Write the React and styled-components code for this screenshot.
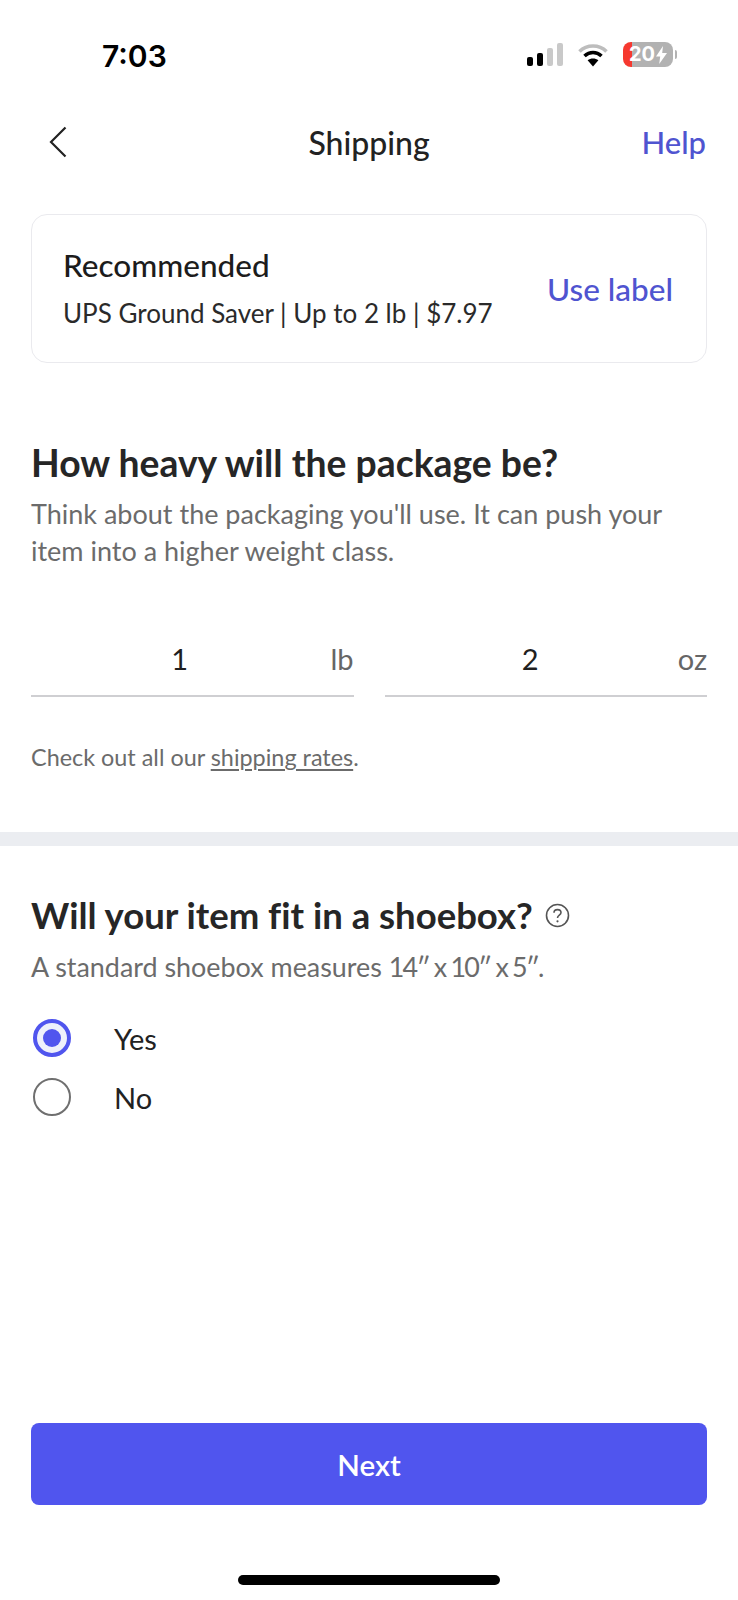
import React from "react";
import styled, { createGlobalStyle } from "styled-components";

const Global = createGlobalStyle`
  html, body { margin: 0; padding: 0; background: #fff; }
  * { box-sizing: border-box; }
`;

const FONT = `Lato, "Noto Sans", sans-serif`;
const BLUE = "#5055ee";
const LINK = "#4f54d0";

const Page = styled.div`
  width: 738px;
  height: 1600px;
  display: flex;
  flex-direction: column;
  background: #fff;
  font-family: ${FONT};
  color: #222;
  overflow: hidden;
`;

const StatusBar = styled.div`
  height: 111px;
  padding: 36px 65px 0 102px;
  display: flex;
  justify-content: space-between;
  align-items: flex-start;
`;

const Clock = styled.div`
  font-family: Inter, sans-serif;
  font-size: 30px;
  font-weight: 600;
  line-height: 40px;
  color: #000;
`;

const StatusIcons = styled.div`
  display: flex;
  align-items: center;
  margin-top: 6px;
  gap: 15px;
`;

const Battery = styled.div`
  position: relative;
  width: 50px;
  height: 25px;
  border-radius: 8px;
  background: linear-gradient(90deg, #f6392f 0 9px, #b2b2b2 9px);
  color: #fff;
  font-family: Inter, sans-serif;
  font-weight: 700;
  font-size: 20px;
  line-height: 25px;
  padding-left: 6px;
  display: flex;
  align-items: center;
  gap: 1px;
  &::after {
    content: "";
    position: absolute;
    right: -4px;
    top: 8px;
    width: 2px;
    height: 9px;
    border-radius: 0 2px 2px 0;
    background: #b2b2b2;
  }
`;

const NavBar = styled.div`
  height: 62px;
  padding: 0 32px;
  display: grid;
  grid-template-columns: 1fr auto 1fr;
  align-items: center;
`;

const BackSlot = styled.div`
  padding-left: 17px;
  display: flex;
  align-items: center;
`;

const NavTitle = styled.div`
  font-size: 32px;
  font-weight: 500;
  color: #222;
`;

const HelpLink = styled.div`
  justify-self: end;
  font-size: 31px;
  font-weight: 500;
  color: ${LINK};
`;

const Content = styled.div`
  padding: 0 31px;
  display: flex;
  flex-direction: column;
`;

const Card = styled.div`
  margin-top: 41px;
  height: 149px;
  border: 1.5px solid #eaeaee;
  border-radius: 16px;
  padding: 0 33px 0 31px;
  display: flex;
  align-items: center;
  justify-content: space-between;
`;

const CardText = styled.div`
  display: flex;
  flex-direction: column;
  gap: 12px;
`;

const CardTitle = styled.div`
  font-size: 31.5px;
  font-weight: 500;
  line-height: 36px;
  color: #1c1c1c;
`;

const CardLine = styled.div`
  font-size: 26px;
  line-height: 36px;
  color: #2a2a2a;
`;

const CardAction = styled.div`
  font-size: 31.5px;
  font-weight: 500;
  color: ${LINK};
`;

const Heading = styled.h2`
  margin: ${(p) => p.$top}px 0 0;
  font-size: ${(p) => p.$size}px;
  font-weight: 700;
  line-height: 44px;
  color: #262626;
  font-variant-ligatures: none;
  display: flex;
  align-items: center;
  gap: 12px;
`;

const Body = styled.p`
  margin: ${(p) => p.$top}px 0 0;
  font-size: ${(p) => p.$size}px;
  line-height: 37px;
  color: #6b6b6b;
`;

const Measure = styled.span`
  letter-spacing: -1.8px;
`;

const Fields = styled.div`
  margin-top: 72px;
  display: grid;
  grid-template-columns: 1fr 1fr;
  gap: 31px;
`;

const Field = styled.div`
  height: 56px;
  border-bottom: 2px solid #cfcfd2;
  display: grid;
  align-items: start;
  font-size: 29px;
  line-height: 36px;
`;

const FieldValue = styled.span`
  grid-column: 1;
  grid-row: 1;
  text-align: center;
  color: #1f1f1f;
  padding-right: ${(p) => p.$shift}px;
`;

const FieldUnit = styled.span`
  grid-column: 1;
  grid-row: 1;
  text-align: right;
  color: #666;
`;

const RateNote = styled.div`
  margin-top: 43px;
  font-size: 23.4px;
  line-height: 34px;
  color: #6b6b6b;
`;

const RateLink = styled.span`
  text-decoration: underline;
  text-underline-offset: 3px;
  text-decoration-thickness: 1.5px;
`;

const Divider = styled.div`
  margin-top: 58px;
  height: 14px;
  background: #ebedf1;
`;

const Radios = styled.div`
  margin-top: 34px;
  display: flex;
  flex-direction: column;
  gap: 21px;
`;

const RadioRow = styled.div`
  display: flex;
  align-items: center;
  gap: 43px;
  padding-left: 2px;
  font-size: 29px;
  color: #222;
`;

const RadioDot = styled.span`
  width: 38px;
  height: 38px;
  border-radius: 50%;
  flex: none;
  border: ${(p) => (p.$on ? `4px solid ${BLUE}` : "2px solid #6f6f6f")};
  background: ${(p) => (p.$on ? "#eef0fb" : "#fff")};
  display: flex;
  align-items: center;
  justify-content: center;
  &::after {
    content: "";
    display: ${(p) => (p.$on ? "block" : "none")};
    width: 18px;
    height: 18px;
    border-radius: 50%;
    background: ${BLUE};
  }
`;

const Footer = styled.div`
  margin-top: auto;
  padding: 0 31px 15px;
  display: flex;
  flex-direction: column;
  align-items: center;
`;

const NextButton = styled.button`
  width: 100%;
  height: 82px;
  border: none;
  border-radius: 8px;
  background: ${BLUE};
  color: #fff;
  font-family: ${FONT};
  font-size: 29.5px;
  font-weight: 600;
`;

const HomeBar = styled.div`
  margin-top: 70px;
  width: 262px;
  height: 10px;
  border-radius: 5px;
  background: #000;
`;

const Signal = () => (
  <svg width="36" height="24" viewBox="0 0 36 24">
    <rect x="0" y="14" width="6" height="9" rx="2" fill="#000" />
    <rect x="10" y="10" width="6" height="13" rx="2" fill="#000" />
    <rect x="20" y="5" width="6" height="18" rx="2" fill="#c9c9c9" />
    <rect x="30" y="0" width="6" height="23" rx="2" fill="#c9c9c9" />
  </svg>
);

const Wifi = () => (
  <svg width="30" height="24" viewBox="0 0 30 24">
    <path d="M1.5 8.5C9 1.2 21 1.2 28.5 8.5" fill="none" stroke="#bdbdbd" strokeWidth="3.6" />
    <path d="M6.5 13C11.5 8.4 18.5 8.4 23.5 13" fill="none" stroke="#000" strokeWidth="3.6" />
    <path d="M15 23.5l-5.4-6.3c3.2-2.4 7.6-2.4 10.8 0z" fill="#000" />
  </svg>
);

const Bolt = () => (
  <svg width="11" height="18" viewBox="0 0 11 18">
    <path d="M7 0L0 10.5h4.2L3.2 18 11 7H6.2z" fill="#fff" />
  </svg>
);

const Back = () => (
  <svg width="18" height="32" viewBox="0 0 18 32">
    <path d="M16.5 1.5L2 16l14.5 14.5" fill="none" stroke="#222" strokeWidth="2.2" />
  </svg>
);

const HelpIcon = () => (
  <svg width="25" height="25" viewBox="0 0 25 25">
    <circle cx="12.5" cy="12.5" r="11" fill="none" stroke="#555" strokeWidth="1.6" />
    <path d="M9 9.8c0-2 1.6-3.2 3.5-3.2s3.5 1.2 3.5 3c0 2.6-3.5 2.6-3.5 5.4" fill="none" stroke="#555" strokeWidth="1.6" />
    <circle cx="12.5" cy="18.3" r="1.1" fill="#555" />
  </svg>
);

export default function App() {
  return (
    <Page>
      <Global />
      <StatusBar>
        <Clock>7:03</Clock>
        <StatusIcons>
          <Signal />
          <Wifi />
          <Battery>
            20
            <Bolt />
          </Battery>
        </StatusIcons>
      </StatusBar>
      <NavBar>
        <BackSlot>
          <Back />
        </BackSlot>
        <NavTitle>Shipping</NavTitle>
        <HelpLink>Help</HelpLink>
      </NavBar>
      <Content>
        <Card>
          <CardText>
            <CardTitle>Recommended</CardTitle>
            <CardLine>UPS Ground Saver | Up to 2 lb | $7.97</CardLine>
          </CardText>
          <CardAction>Use label</CardAction>
        </Card>
        <Heading $top={78} $size={37.3}>How heavy will the package be?</Heading>
        <Body $top={10} $size={27}>
          Think about the packaging you'll use. It can push your
          <br />
          item into a higher weight class.
        </Body>
        <Fields>
          <Field>
            <FieldValue $shift={25}>1</FieldValue>
            <FieldUnit>lb</FieldUnit>
          </Field>
          <Field>
            <FieldValue $shift={31}>2</FieldValue>
            <FieldUnit>oz</FieldUnit>
          </Field>
        </Fields>
        <RateNote>
          Check out all our <RateLink>shipping rates</RateLink>.
        </RateNote>
      </Content>
      <Divider />
      <Content>
        <Heading $top={47} $size={36.5}>
          Will your item fit in a shoebox? <HelpIcon />
        </Heading>
        <Body $top={11} $size={26.9}>
          A standard shoebox measures <Measure>14″ x 10″ x 5″.</Measure>
        </Body>
        <Radios>
          <RadioRow>
            <RadioDot $on />
            Yes
          </RadioRow>
          <RadioRow>
            <RadioDot />
            No
          </RadioRow>
        </Radios>
      </Content>
      <Footer>
        <NextButton>Next</NextButton>
        <HomeBar />
      </Footer>
    </Page>
  );
}
